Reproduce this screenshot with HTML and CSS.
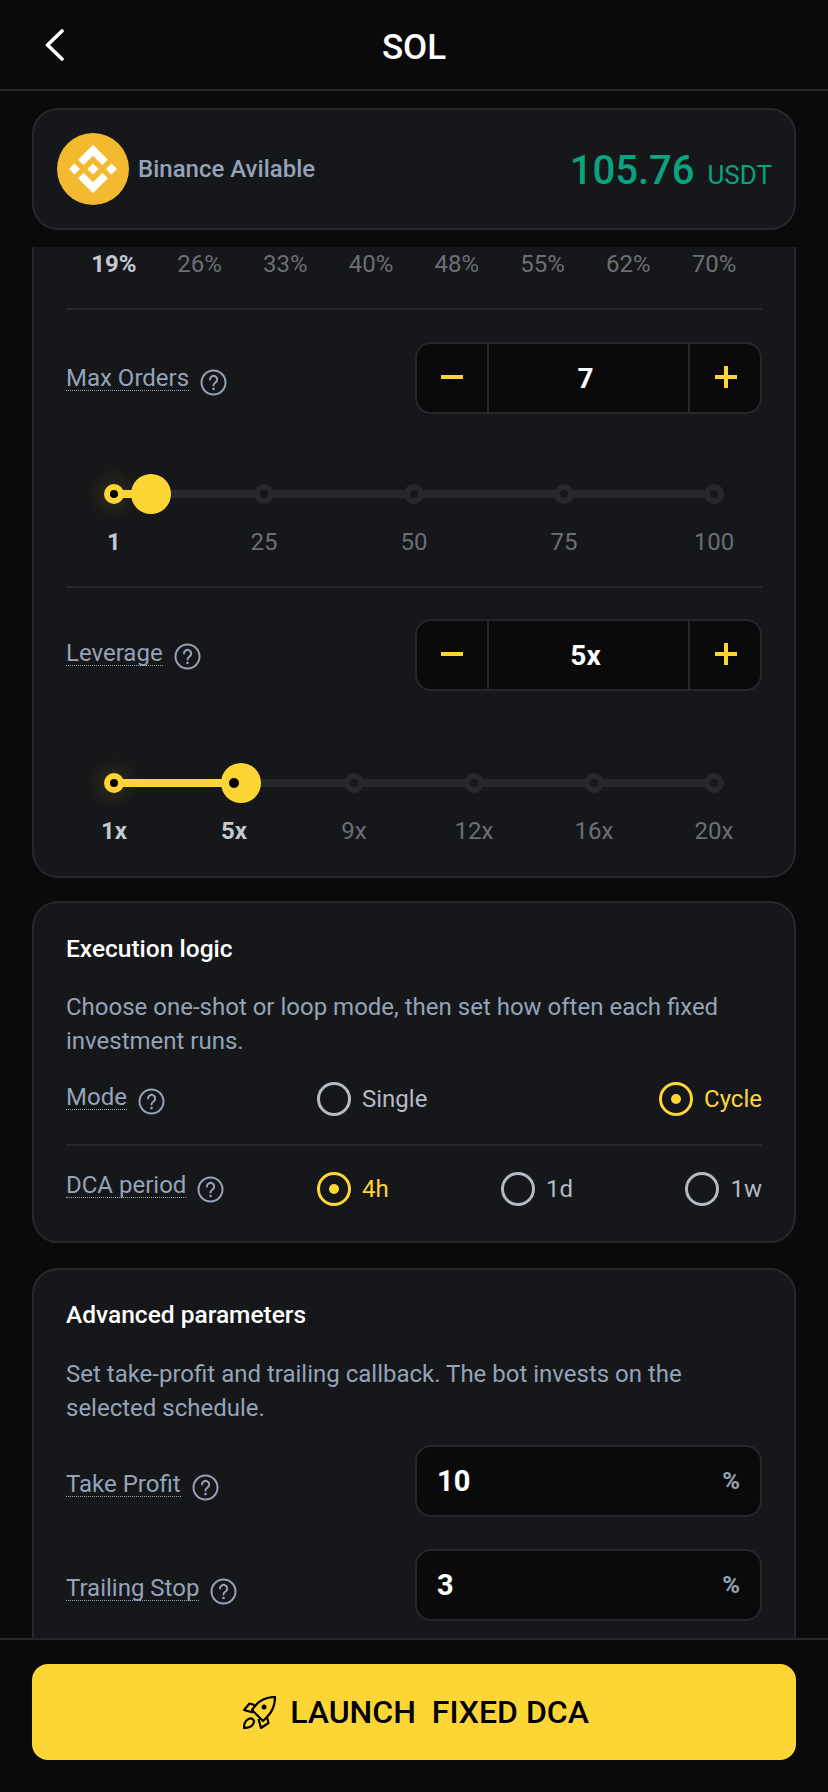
FILE: index.html
```html
<!DOCTYPE html>
<html lang="en">
<head>
<meta charset="UTF-8">
<meta name="viewport" content="width=device-width, initial-scale=1.0">
<title>SOL</title>
<link rel="stylesheet" href="styles.css">
</head>
<body>
<header class="topbar">
    <svg class="back" viewBox="0 0 20 34" width="20" height="34"><path d="M17 3 2.500 17 17 31" fill="none" stroke="#fff" stroke-width="3.600" stroke-linecap="round" stroke-linejoin="round"/></svg>
    <h1>SOL</h1>
</header>

<main class="content">
    <section class="card balance">
        <div class="exchange">
            <svg class="logo" viewBox="0 0 72 72" width="72" height="72">
                <circle cx="36" cy="36" r="36" fill="#f3ba2f"/>
                <g transform="translate(12 12) scale(.369)" fill="#fff">
                    <path d="M39.500 54.500 65 29l25.500 25.500 14.800-14.800L65 -.5 24.700 39.700zM0 65l14.800-14.800L29.600 65 14.800 79.800zm39.500 10.500L65 101l25.500-25.500 14.800 14.800L65 130.500 24.700 90.300zM100.400 65l14.800-14.800L130 65l-14.800 14.800zM80 65 65 50 54 61l-1.300 1.300-2.600 2.600L65 80z"/>
                </g>
            </svg>
            <span class="exchange-name">Binance Avilable</span>
        </div>
        <div class="amount">105.76<span class="unit">USDT</span></div>
    </section>

    <section class="card card-cut">
        <div class="pct-row">
            <span class="pct active">19%</span>
            <span class="pct">26%</span>
            <span class="pct">33%</span>
            <span class="pct">40%</span>
            <span class="pct">48%</span>
            <span class="pct">55%</span>
            <span class="pct">62%</span>
            <span class="pct">70%</span>
        </div>
        <div class="divider"></div>

        <div class="row row-orders">
            <div class="field-label"><span class="dotted">Max Orders</span>
                <svg class="help" viewBox="0 0 27 27" width="27" height="27"><circle cx="13.500" cy="13.500" r="12" /><path d="M10 10.500a3.600 3.600 0 1 1 5.500 3c-1.200.8-2 1.500-2 3" /><circle class="help-dot" cx="13.500" cy="20" r="1.300" /></svg>
            </div>
            <div class="stepper">
                <span class="step minus"></span>
                <span class="step-value">7</span>
                <span class="step plus"></span>
            </div>
        </div>

        <div class="slider slider-orders">
            <div class="track"></div>
            <div class="fill" style="width: 40px;"></div>
            <div class="thumb" style="left: 37px;"></div>
            <div class="mark on start"><i class="dot"></i><span>1</span></div>
            <div class="mark"><i class="dot"></i><span>25</span></div>
            <div class="mark"><i class="dot"></i><span>50</span></div>
            <div class="mark"><i class="dot"></i><span>75</span></div>
            <div class="mark"><i class="dot"></i><span>100</span></div>
        </div>
        <div class="divider divider-slider"></div>

        <div class="row row-leverage">
            <div class="field-label"><span class="dotted">Leverage</span>
                <svg class="help" viewBox="0 0 27 27" width="27" height="27"><circle cx="13.500" cy="13.500" r="12" /><path d="M10 10.500a3.600 3.600 0 1 1 5.500 3c-1.200.8-2 1.500-2 3" /><circle class="help-dot" cx="13.500" cy="20" r="1.300" /></svg>
            </div>
            <div class="stepper">
                <span class="step minus"></span>
                <span class="step-value">5x</span>
                <span class="step plus"></span>
            </div>
        </div>

        <div class="slider slider-leverage">
            <div class="track"></div>
            <div class="fill" style="width: 120px;"></div>
            <div class="thumb" style="left: 127px;"></div>
            <div class="mark on start"><i class="dot"></i><span>1x</span></div>
            <div class="mark on"><i class="dot"></i><span>5x</span></div>
            <div class="mark"><i class="dot"></i><span>9x</span></div>
            <div class="mark"><i class="dot"></i><span>12x</span></div>
            <div class="mark"><i class="dot"></i><span>16x</span></div>
            <div class="mark"><i class="dot"></i><span>20x</span></div>
        </div>
    </section>

    <section class="card card-logic">
        <h2>Execution logic</h2>
        <p class="desc">Choose one-shot or loop mode, then set how often each fixed investment runs.</p>
        <div class="row radio-row">
            <div class="field-label"><span class="dotted">Mode</span>
                <svg class="help" viewBox="0 0 27 27" width="27" height="27"><circle cx="13.500" cy="13.500" r="12" /><path d="M10 10.500a3.600 3.600 0 1 1 5.500 3c-1.200.8-2 1.500-2 3" /><circle class="help-dot" cx="13.500" cy="20" r="1.300" /></svg>
            </div>
            <div class="options">
                <label class="radio"><i class="circle"></i>Single</label>
                <label class="radio checked"><i class="circle"></i>Cycle</label>
            </div>
        </div>
        <div class="divider divider-radio"></div>
        <div class="row radio-row">
            <div class="field-label"><span class="dotted">DCA period</span>
                <svg class="help" viewBox="0 0 27 27" width="27" height="27"><circle cx="13.500" cy="13.500" r="12" /><path d="M10 10.500a3.600 3.600 0 1 1 5.500 3c-1.200.8-2 1.500-2 3" /><circle class="help-dot" cx="13.500" cy="20" r="1.300" /></svg>
            </div>
            <div class="options">
                <label class="radio checked"><i class="circle"></i>4h</label>
                <label class="radio"><i class="circle"></i>1d</label>
                <label class="radio"><i class="circle"></i>1w</label>
            </div>
        </div>
    </section>

    <section class="card card-advanced">
        <h2>Advanced parameters</h2>
        <p class="desc">Set take-profit and trailing callback. The bot invests on the selected schedule.</p>
        <div class="row input-row">
            <div class="field-label"><span class="dotted">Take Profit</span>
                <svg class="help" viewBox="0 0 27 27" width="27" height="27"><circle cx="13.500" cy="13.500" r="12" /><path d="M10 10.500a3.600 3.600 0 1 1 5.500 3c-1.200.8-2 1.500-2 3" /><circle class="help-dot" cx="13.500" cy="20" r="1.300" /></svg>
            </div>
            <div class="num-input"><span class="num">10</span><span class="suffix">%</span></div>
        </div>
        <div class="row input-row">
            <div class="field-label"><span class="dotted">Trailing Stop</span>
                <svg class="help" viewBox="0 0 27 27" width="27" height="27"><circle cx="13.500" cy="13.500" r="12" /><path d="M10 10.500a3.600 3.600 0 1 1 5.500 3c-1.200.8-2 1.500-2 3" /><circle class="help-dot" cx="13.500" cy="20" r="1.300" /></svg>
            </div>
            <div class="num-input"><span class="num">3</span><span class="suffix">%</span></div>
        </div>
    </section>
</main>

<footer class="bottombar">
    <button class="launch">
        <svg viewBox="0 0 33 33" width="33" height="33" fill="none" stroke="#000" stroke-width="2.200" stroke-linejoin="round">
            <path d="M32 1C24 1 17 4 12 10L9 14 20 25l4-4C29 16 32 9 32 1Z"/>
            <path d="M11.500 9 6.500 7.500 1 14l9 2.500"/>
            <path d="M24 21.500 25.500 27 18 32l-2.500-9"/>
            <path d="M7 22.500C3 23.500 1 27 1 32c5 0 9-2 10-6 .3-2-2-4-4-3.500Z"/>
            <circle cx="21" cy="11" r="2.500" fill="#000" stroke="none"/>
        </svg>
        <span>LAUNCH&nbsp; FIXED DCA</span>
    </button>
</footer>
</body>
</html>
```

FILE: styles.css
```css
* {
    box-sizing: border-box;
}
html, body {
    height: 100%;
}
body {
    margin: 0;
    height: 1792px;
    display: flex;
    flex-direction: column;
    overflow: hidden;
    background-color: #0a0a0a;
    color: #fff;
    font-family: Roboto, "Noto Sans", sans-serif;
}
.topbar {
    position: relative;
    flex: none;
    height: 91px;
    display: flex;
    align-items: center;
    justify-content: center;
    border-bottom: 2px solid #26272b;
}
.topbar h1 {
    margin: 6px 0 0;
    font-size: 35px;
    font-weight: 500;
}
.back {
    position: absolute;
    left: 45px;
    top: 28px;
}
.content {
    flex: 1;
    min-height: 0;
    overflow: hidden;
    padding: 17px 32px 0;
}
.card {
    background-color: #16171a;
    border: 2px solid #26272b;
    border-radius: 26px;
    margin-bottom: 25px;
    padding: 0 32px;
}
.balance {
    height: 122px;
    margin-bottom: 17px;
    padding: 0 22px 0 23px;
    display: flex;
    align-items: center;
    justify-content: space-between;
}
.exchange {
    display: flex;
    align-items: center;
    gap: 9px;
}
.exchange-name {
    font-size: 24px;
    font-weight: 500;
    color: #94a3b8;
}
.amount {
    font-size: 40px;
    font-weight: 500;
    color: #0aa37f;
    display: flex;
    align-items: baseline;
    margin-top: 2px;
}
.unit {
    font-size: 26px;
    font-weight: 400;
    margin-left: 13px;
}
.card-cut {
    border-top: none;
    border-radius: 0 0 26px 26px;
    padding-bottom: 30px;
    margin-bottom: 23px;
}
.pct-row {
    display: grid;
    grid-template-columns: repeat(8, 1fr);
    margin: 0 5px;
    height: 34px;
    line-height: 34px;
    margin-bottom: 27px;
}
.pct {
    text-align: center;
    font-size: 24px;
    color: #6b6e76;
}
.pct.active {
    font-weight: 700;
    color: #c3c8d1;
}
.divider {
    height: 2px;
    background-color: #26272b;
}
.row {
    display: flex;
    align-items: center;
    justify-content: space-between;
}
.row-orders {
    margin-top: 32px;
}
.row-leverage {
    margin-top: 31px;
}
.row-leverage .field-label {
    margin-top: -5px;
}
.field-label {
    display: flex;
    align-items: center;
    gap: 11px;
    font-size: 24px;
    color: #94a3b8;
}
.dotted {
    border-bottom: 1px dotted #94a3b8;
    padding-top: 2px;
    line-height: 23px;
}
.help {
    fill: none;
    stroke: #94a3b8;
    stroke-width: 2;
    stroke-linecap: round;
    margin-top: 8px;
}
.help-dot {
    fill: #94a3b8;
    stroke: none;
}
.stepper {
    width: 347px;
    height: 72px;
    display: flex;
    background-color: #0a0a0a;
    border: 2px solid #26272b;
    border-radius: 16px;
    overflow: hidden;
}
.step {
    position: relative;
    flex: none;
    width: 70px;
}
.step::before, .plus::after {
    content: "";
    position: absolute;
    left: 24px;
    top: 31px;
    width: 22px;
    height: 4px;
    background-color: #fdd535;
}
.plus::before {
    left: 25px;
}
.plus::after {
    left: 34px;
    top: 22px;
    width: 4px;
    height: 22px;
}
.step-value {
    flex: 1;
    display: flex;
    align-items: center;
    justify-content: center;
    padding-right: 6px;
    font-size: 28px;
    font-weight: 700;
    border-left: 2px solid #26272b;
    border-right: 2px solid #26272b;
}
.slider {
    position: relative;
    display: flex;
    justify-content: space-between;
    margin-left: 28px;
    margin-right: 28px;
}
.slider-orders {
    margin-top: 70px;
}
.slider-leverage {
    margin-top: 82px;
}
.divider-slider {
    margin-top: 29px;
}
.track {
    position: absolute;
    left: 20px;
    right: 20px;
    top: 6px;
    height: 8px;
    background-color: #27282c;
}
.fill {
    position: absolute;
    left: 20px;
    top: 6px;
    height: 8px;
    background-color: #fdd535;
}
.thumb {
    position: absolute;
    top: -10px;
    width: 40px;
    height: 40px;
    border-radius: 50%;
    background-color: #fdd535;
    z-index: 1;
}
.mark {
    position: relative;
    width: 40px;
    display: flex;
    flex-direction: column;
    align-items: center;
    gap: 23px;
    font-size: 24px;
    line-height: 30px;
    color: #6b6e76;
}
.mark span {
    white-space: nowrap;
}
.mark.on span {
    font-weight: 700;
    color: #c3c8d1;
}
.dot {
    width: 20px;
    height: 20px;
    border-radius: 50%;
    background-color: #16171a;
    border: 6px solid #27282c;
    position: relative;
}
.mark.on .dot {
    background-color: #000;
    border-color: #fdd535;
    z-index: 2;
}
.mark.start .dot {
    box-shadow: 0 0 22px rgba(253, 213, 53, .3);
}
.mark.on + .mark.on .dot {
    width: 10px;
    height: 10px;
    margin: 5px;
    border: none;
}
h2 {
    margin: 0;
    font-size: 24.500px;
    line-height: 32px;
    font-weight: 500;
}
.desc {
    margin: 0;
    font-size: 24px;
    line-height: 34px;
    color: #94a3b8;
}
.card-logic {
    height: 342px;
    padding-top: 30px;
}
.card-logic .desc {
    margin-top: 25px;
}
.radio-row {
    height: 44px;
    margin-top: 19px;
}
.radio-row .field-label {
    margin-top: -4px;
}
.divider-radio {
    margin-top: 23px;
}
.divider-radio + .radio-row {
    margin-top: 21px;
}
.divider-radio + .radio-row .field-label {
    margin-top: -8px;
}
.options {
    width: 445px;
    display: flex;
    justify-content: space-between;
}
.radio {
    display: flex;
    align-items: center;
    gap: 11px;
    font-size: 24px;
    color: #b4bac5;
}
.radio.checked {
    color: #fdd535;
}
.circle {
    width: 34px;
    height: 34px;
    border-radius: 50%;
    border: 3.500px solid #b4bac5;
    display: flex;
    align-items: center;
    justify-content: center;
}
.radio.checked .circle {
    border-color: #fdd535;
}
.radio.checked .circle::after {
    content: "";
    width: 10px;
    height: 10px;
    border-radius: 50%;
    background-color: #fdd535;
}
.card-advanced {
    padding-top: 29px;
    height: 420px;
}
.card-advanced .desc {
    margin-top: 26px;
}
.input-row {
    margin-top: 32px;
}
.input-row .field-label {
    margin-top: 5px;
}
.card-advanced .desc + .input-row {
    margin-top: 20px;
}
.num-input {
    width: 347px;
    height: 72px;
    display: flex;
    align-items: center;
    justify-content: space-between;
    padding: 0 20px;
    background-color: #0a0a0a;
    border: 2px solid #26272b;
    border-radius: 16px;
}
.num {
    font-size: 29px;
    font-weight: 700;
}
.suffix {
    font-size: 24px;
    font-weight: 700;
    color: #94a3b8;
}
.bottombar {
    flex: none;
    height: 154px;
    padding: 24px 32px 0;
    background-color: #0a0a0a;
    border-top: 2px solid #26272b;
}
.launch {
    width: 100%;
    height: 96px;
    display: flex;
    align-items: center;
    justify-content: center;
    gap: 14px;
    padding: 0 0 0 4px;
    border: none;
    border-radius: 16px;
    background-color: #fdd535;
    color: #000;
    font-family: inherit;
    font-size: 32px;
    font-weight: 500;
}
```
